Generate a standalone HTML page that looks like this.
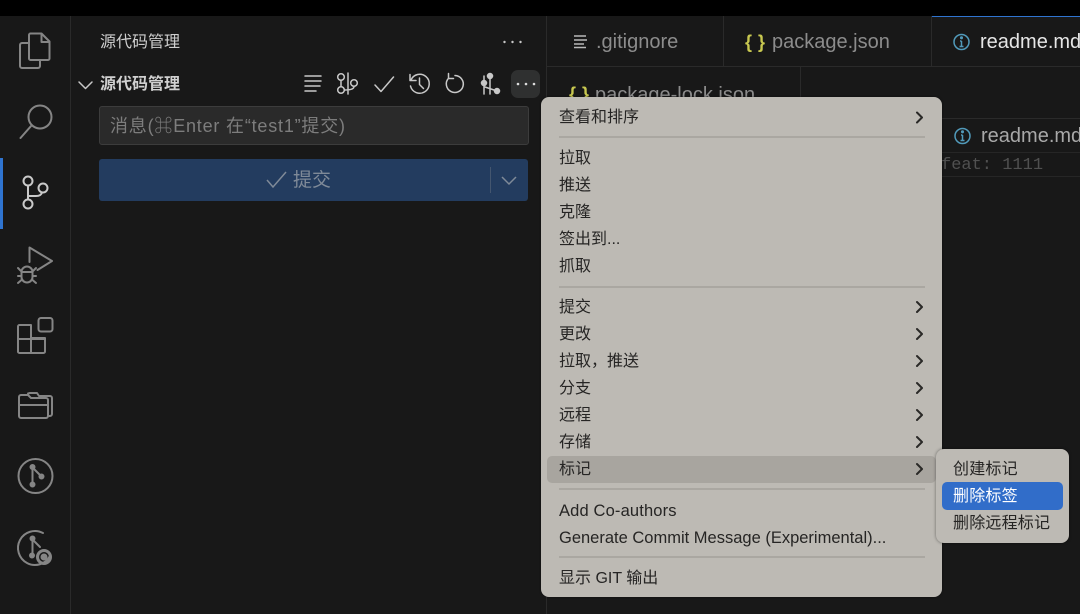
<!DOCTYPE html>
<html><head><meta charset="utf-8"><style>
html,body{margin:0;padding:0;background:#181818}
body{width:1080px;height:614px;position:relative;overflow:hidden;font-family:"Liberation Sans","Noto Sans CJK SC",sans-serif}
.a{position:absolute;white-space:nowrap}
.l{position:absolute;background:#2a2a2a}
svg{position:absolute;overflow:visible;fill:none}
.m{position:absolute;left:559px;font-size:16px;line-height:20px;color:#262524;white-space:nowrap;margin-top:1px}
.s{position:absolute;left:559px;width:366px;height:2px;background:#aaa7a1}
.t{font-size:20px;line-height:26px}
</style></head><body>
<div class="a" style="left:0;top:0;width:1080px;height:16px;background:#000"></div>
<div class="l" style="left:70px;top:16px;width:1px;height:598px"></div>
<div class="l" style="left:546px;top:16px;width:1px;height:598px"></div>
<div class="a" style="left:0;top:158px;width:3px;height:71px;background:#2f74d0"></div>

<svg style="left:0;top:0" width="70" height="614" stroke="#858585" stroke-width="2" stroke-linejoin="round" stroke-linecap="round">
<path d="M29 43h-7a2 2 0 0 0-2 2v21a2 2 0 0 0 2 2h16a2 2 0 0 0 2-2v-6"/>
<path d="M29 35a1.500 1.500 0 0 1 1.500-1.500h11l8 8v17a1.500 1.500 0 0 1-1.500 1.500h-17.500a1.500 1.500 0 0 1-1.500-1.500zM41.500 34v8h8"/>
<circle cx="40" cy="117" r="11.500"/><path d="M31.500 125.500L20.500 138"/>
<g stroke="#c9c9c9"><circle cx="28" cy="181" r="4.500"/><circle cx="43" cy="188" r="4.500"/><circle cx="28" cy="204" r="4.500"/><path d="M28 185.500v14M28 196h8q5 0 6-3.500"/></g>
<path d="M29.500 262V247.500L52 261 37.500 270"/>
<path d="M21.500 272a5.500 5.500 0 0 1 11 0v5a5.500 5.500 0 0 1-11 0zM21.500 272h11M18 268l3.500 3.500M36 268l-3.500 3.500M18 276h3.500M32.500 276h3.500M18 283l3.500-3M36 283l-3.500-3"/>
<path d="M18 352v-25.500a1.500 1.500 0 0 1 1.500-1.500h11.500v13h14v13.500a1.500 1.500 0 0 1-1.500 1.500h-24a1.500 1.500 0 0 1-1.500-1.500zM18 339h27M31 338v15"/>
<rect x="38.500" y="318" width="14" height="13.500" rx="2.500"/>
<path d="M19 405v-8a2 2 0 0 1 2-2h7l3 3h15a2 2 0 0 1 2 2v5M19 405h29v11a2 2 0 0 1-2 2h-25a2 2 0 0 1-2-2zM28 393.500l2-.5h7l2 3h11a2 2 0 0 1 2 2v16a2 2 0 0 1-2 2h-2"/>
<circle cx="35.500" cy="476" r="17"/>
<path d="M32.500 467v17M33 468l8 8"/>
<circle cx="32.500" cy="467" r="2" fill="#858585"/><circle cx="32.500" cy="484.500" r="2" fill="#858585"/><circle cx="41.500" cy="476.500" r="2" fill="#858585"/>
<path d="M43 533a17 17 0 1 0 7 23"/>
<path d="M32.500 539v16M33 540l7 7"/>
<circle cx="32.500" cy="538.500" r="2" fill="#858585"/><circle cx="32" cy="555.500" r="2" fill="#858585"/>
<circle cx="44" cy="557" r="6.500" stroke-width="3"/><circle cx="44" cy="557" r="2.500" fill="#858585"/>
</svg>

<div class="a" style="left:100px;top:33px;font-size:16px;line-height:20px;color:#cfcfcf">源代码管理</div>
<div class="a" style="left:100px;top:75px;font-size:16px;line-height:20px;font-weight:700;color:#d0d0d0">源代码管理</div>
<svg style="left:0;top:0" width="546" height="210" stroke="#c8c8c8" stroke-width="1.500" stroke-linecap="round" stroke-linejoin="round">
<circle cx="504.500" cy="42" r="1.200" fill="#c8c8c8" stroke="none"/><circle cx="512.500" cy="42" r="1.200" fill="#c8c8c8" stroke="none"/><circle cx="520.500" cy="42" r="1.200" fill="#c8c8c8" stroke="none"/>
<path d="M79 82l6.500 6.500L92 82"/>
<path d="M305 76h16M305 81h16M305 86h15M305 91h11"/>
<circle cx="341" cy="77" r="3.300"/><circle cx="341" cy="90" r="3.300"/><circle cx="354" cy="83" r="3.300"/>
<path d="M348 73v21M341 80.500v6M354 86.500q0 3.500-9.500 3.500"/>
<path d="M375 85l6 6.500L393.500 77"/>
<path d="M411 80a9.500 9.500 0 1 1-.5 6M410 74.500v6h6M419.500 78v6.500l4 4"/>
<path d="M455 75.500a8.500 8.500 0 1 1-6.500 2.800M448.500 73.500v5h5"/>
<path d="M484 76v18M490 76v18M485 87l12 4"/>
<circle cx="484" cy="83" r="2.500" fill="#c8c8c8"/><circle cx="490" cy="76" r="2.500" fill="#c8c8c8"/><circle cx="497" cy="91" r="2.500" fill="#c8c8c8"/>
</svg>
<div class="a" style="left:511px;top:70px;width:29px;height:28px;border-radius:7px;background:#2f3030"></div>
<svg style="left:0;top:0" width="546" height="100"><circle cx="518" cy="84" r="1.300" fill="#ddd"/><circle cx="526" cy="84" r="1.300" fill="#ddd"/><circle cx="534" cy="84" r="1.300" fill="#ddd"/></svg>

<div class="a" style="left:99px;top:106px;width:428px;height:37px;background:#2a2a2a;border:1px solid #3c3c3c;border-radius:3px"></div>
<div class="a" style="left:110px;top:115px;font-size:18px;line-height:22px;letter-spacing:.8px;color:#7d7d7d">消息(⌘Enter 在“test1”提交)</div>

<div class="a" style="left:99px;top:159px;width:429px;height:42px;background:#233c5f;border-radius:3px"></div>
<div class="a" style="left:490px;top:167px;width:1px;height:26px;background:#44566f"></div>
<svg style="left:0;top:0" width="546" height="210" stroke="#7f8a98" stroke-width="1.500"><path d="M267 180l6 7 13-15"/><path d="M502 177l7 7 7-7"/></svg>
<div class="a" style="left:293px;top:168px;font-size:19px;line-height:25px;color:#7f8a98">提交</div>

<!-- tabs -->
<div class="l" style="left:547px;top:66px;width:533px;height:1px"></div>
<div class="l" style="left:723px;top:16px;width:1px;height:50px"></div>
<div class="l" style="left:931px;top:16px;width:1px;height:50px"></div>
<div class="a" style="left:932px;top:16px;width:148px;height:1px;background:#2f74d0"></div>
<div class="l" style="left:800px;top:67px;width:1px;height:50px"></div>
<div class="l" style="left:940px;top:118px;width:140px;height:1px"></div>
<div class="a" style="left:940px;top:152px;width:140px;height:1px;background:#262626"></div>
<div class="a" style="left:940px;top:176px;width:140px;height:1px;background:#262626"></div>

<svg style="left:0;top:0" width="1080" height="160" stroke="#b8b8b8" stroke-width="1.400">
<path d="M574 36h12M574 40h13M574 44h10M574 47.500h12"/>
</svg>
<div class="a t" style="left:596px;top:29px;color:#8c8c8c">.gitignore</div>
<div class="a" style="left:745px;top:30px;font-size:18px;line-height:24px;font-weight:700;color:#c8c850;letter-spacing:.5px">{ }</div>
<div class="a t" style="left:772px;top:29px;color:#8c8c8c">package.json</div>
<svg style="left:0;top:0" width="1080" height="160" stroke="#519aba" stroke-width="1.500">
<circle cx="961.500" cy="42" r="7.500"/><path d="M961.500 41v5M959.500 46.500h4M960 41h1.500"/><circle cx="961.500" cy="37.800" r=".8" fill="#519aba"/>
<circle cx="962.500" cy="136" r="7.500"/><path d="M962.500 135v5M960.500 140.500h4M961 135h1.500"/><circle cx="962.500" cy="131.800" r=".8" fill="#519aba"/>
</svg>
<div class="a t" style="left:980px;top:29px;color:#e6e6e6">readme.md</div>
<div class="a" style="left:569px;top:82px;font-size:18px;line-height:24px;font-weight:700;color:#c8c850;letter-spacing:.5px">{ }</div>
<div class="a t" style="left:595px;top:82px;color:#8c8c8c">package-lock.json</div>
<div class="a t" style="left:981px;top:123px;color:#a8a8a8">readme.md</div>
<div class="a" style="left:941px;top:156px;font-family:'Liberation Mono',monospace;font-size:17px;line-height:20px;color:#505050">feat: 1111</div>

<!-- menu -->
<div class="a" style="left:541px;top:97px;width:401px;height:500px;border-radius:8px;background:#bdbab4;box-shadow:0 0 2px rgba(0,0,0,.5)"></div>
<div class="a" style="left:547px;top:456px;width:389px;height:27px;border-radius:5px;background:#a8a59f"></div>
<div class="s" style="top:136px"></div><div class="s" style="top:286px"></div><div class="s" style="top:488px"></div><div class="s" style="top:556px"></div>
<div class="m" style="top:107px">查看和排序</div>
<div class="m" style="top:148px">拉取</div>
<div class="m" style="top:175px">推送</div>
<div class="m" style="top:202px">克隆</div>
<div class="m" style="top:229px">签出到...</div>
<div class="m" style="top:256px">抓取</div>
<div class="m" style="top:297px">提交</div>
<div class="m" style="top:324px">更改</div>
<div class="m" style="top:351px">拉取，推送</div>
<div class="m" style="top:378px">分支</div>
<div class="m" style="top:405px">远程</div>
<div class="m" style="top:432px">存储</div>
<div class="m" style="top:459px">标记</div>
<div class="m" style="top:500px;font-size:16.500px;letter-spacing:.15px">Add Co-authors</div>
<div class="m" style="top:527px;font-size:16.500px">Generate Commit Message (Experimental)...</div>
<div class="m" style="top:568px">显示 GIT 输出</div>
<svg style="left:0;top:0" width="1080" height="614" stroke="#2a2927" stroke-width="2" stroke-linecap="round" stroke-linejoin="round">
<path d="M917 112.500l5 5-5 5M917 302l5 5-5 5M917 329l5 5-5 5M917 356l5 5-5 5M917 383l5 5-5 5M917 410l5 5-5 5M917 437l5 5-5 5M917 464l5 5-5 5"/>
</svg>

<!-- submenu -->
<div class="a" style="left:936px;top:449px;width:133px;height:94px;border-radius:8px;background:#bdbab4;box-shadow:0 0 3px rgba(0,0,0,.45)"></div>
<div class="a" style="left:942px;top:482px;width:121px;height:28px;border-radius:5px;background:#316dc9"></div>
<div class="m" style="left:953px;top:459px;letter-spacing:.2px">创建标记</div>
<div class="m" style="left:953px;top:486px;color:#fff;letter-spacing:.2px">删除标签</div>
<div class="m" style="left:953px;top:513px;letter-spacing:.2px">删除远程标记</div>
</body></html>
